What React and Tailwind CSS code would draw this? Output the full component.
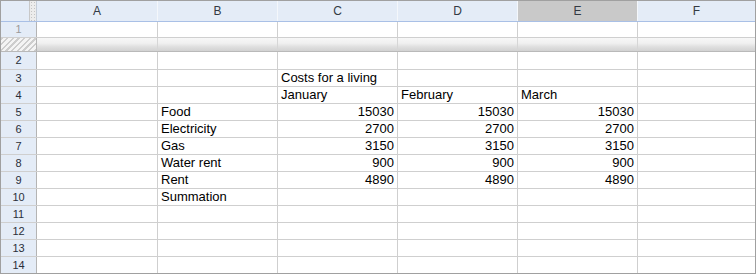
const COLS = [
  { key: "A", w: "w-[121px]" },
  { key: "B", w: "w-[120px]" },
  { key: "C", w: "w-[120px]" },
  { key: "D", w: "w-[120px]" },
  { key: "E", w: "w-[120px]" },
  { key: "F", w: "w-[117px]" },
];

// row number -> { col: [text, align] }
const DATA = {
  3: { C: ["Costs for a living", "l"] },
  4: { C: ["January", "l"], D: ["February", "l"], E: ["March", "l"] },
  5: { B: ["Food", "l"], C: ["15030", "r"], D: ["15030", "r"], E: ["15030", "r"] },
  6: { B: ["Electricity", "l"], C: ["2700", "r"], D: ["2700", "r"], E: ["2700", "r"] },
  7: { B: ["Gas", "l"], C: ["3150", "r"], D: ["3150", "r"], E: ["3150", "r"] },
  8: { B: ["Water rent", "l"], C: ["900", "r"], D: ["900", "r"], E: ["900", "r"] },
  9: { B: ["Rent", "l"], C: ["4890", "r"], D: ["4890", "r"], E: ["4890", "r"] },
  10: { B: ["Summation", "l"] },
};

function Row({ num, height, last, muted }) {
  const cells = DATA[num] || {};
  return (
    <div className={`flex shrink-0 ${height} ${last ? "" : "border-b border-[#cfcfcf]"}`}>
      <div
        className={`w-[36px] shrink-0 flex items-center justify-center bg-[#e4ecf7] border-r border-[#b4b4b4] text-[11px] ${
          muted ? "text-[#9a9a9a]" : "text-[#2a2f3a]"
        }`}
      >
        {num}
      </div>
      {COLS.map((c, i) => {
        const cell = cells[c.key];
        return (
          <div
            key={c.key}
            className={`${c.w} shrink-0 flex items-center whitespace-nowrap text-[13px] text-black px-[3px] ${
              i < COLS.length - 1 ? "border-r border-[#cfcfcf]" : ""
            } ${cell && cell[1] === "r" ? "justify-end" : "justify-start"}`}
          >
            {cell ? cell[0] : null}
          </div>
        );
      })}
    </div>
  );
}

export default function App() {
  const rows = [3, 4, 5, 6, 7, 8, 9, 10, 11, 12, 13, 14];
  return (
    <div
      className="w-[756px] h-[274px] flex flex-col overflow-hidden bg-white border border-[#a0a0a0] select-none"
      style={{ fontFamily: '"Liberation Sans", Arial, sans-serif' }}
    >
      {/* Column headers */}
      <div className="flex shrink-0 h-[21px] border-b border-[#a9c0e6]">
        <div className="w-[36px] shrink-0 flex bg-[#e4ecf7] border-r border-[#c4cdd9]">
          <div className="flex-1" />
          <div className="w-[7px] border-l border-[#c8c8c8] bg-[#ececec] bg-[radial-gradient(#c4c4c4_1px,transparent_1px)] bg-[length:3px_3px]" />
        </div>
        {COLS.map((c, i) => (
          <div
            key={c.key}
            className={`${c.w} shrink-0 flex items-center justify-center text-[12px] text-[#333a44] ${
              c.key === "E" ? "bg-[#c9c9c9]" : "bg-[#e4ecf7]"
            } ${i < COLS.length - 1 ? "border-r border-[#f4f7fb]" : ""}`}
          >
            {c.key}
          </div>
        ))}
      </div>

      {/* Frozen row 1 */}
      <Row num={1} height="h-[16px]" muted />

      {/* Freeze splitter */}
      <div className="flex shrink-0 h-[14px] border-b border-[#b9b9b9]">
        <div className="w-[36px] shrink-0 border-r border-[#b4b4b4] bg-[#f2f2f2] bg-[repeating-linear-gradient(135deg,#cdcdcd_0px,#cdcdcd_1.5px,#f4f4f4_1.5px,#f4f4f4_4px)]" />
        {COLS.map((c, i) => (
          <div
            key={c.key}
            className={`${c.w} shrink-0 bg-[linear-gradient(to_bottom,#f7f7f7_0%,#f0f0f0_40%,#dedede_70%,#d2d2d2_100%)] ${
              i < COLS.length - 1 ? "border-r border-[#d6d6d6]" : ""
            }`}
          />
        ))}
      </div>

      <Row num={2} height="h-[18px]" />
      {rows.map((n) => (
        <Row key={n} num={n} height={n === 14 ? "h-[16px]" : "h-[17px]"} last={n === 14} />
      ))}
    </div>
  );
}
